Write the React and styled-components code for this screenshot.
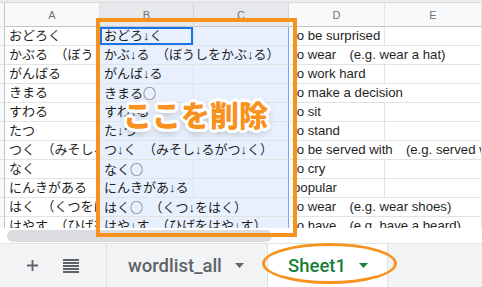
import React from "react";
import styled, { createGlobalStyle, css } from "styled-components";

const orange = "#f7921e";
const gridLine = "#e2e3e3";
const selBg = "#e8f0fe";
const cols = "5px 95px 94px 95px 96px 97px";

const Global = createGlobalStyle`
	html, body {
		margin: 0;
		padding: 0;
		background: #fff;
	}
	body {
		font-family: "Liberation Sans", "Noto Sans CJK JP", sans-serif;
	}
`;

const Page = styled.div`
	position: relative;
	width: 482px;
	height: 287px;
	overflow: hidden;
	display: flex;
	flex-direction: column;
	background: #fff;
`;

const Sheet = styled.div`
	height: 228px;
	overflow: hidden;
	flex-shrink: 0;
`;

const TopStrip = styled.div`
	height: 3px;
	background: #ececec;
	border-bottom: 1px solid #dadada;
	box-sizing: border-box;
`;

const Row = styled.div`
	display: grid;
	grid-template-columns: ${cols};
	height: ${(p) => (p.header ? "24px" : "19px")};
`;

const RowHead = styled.div`
	background: #f8f9fa;
	border-right: 1px solid #c4c7c5;
	border-bottom: 1px solid ${gridLine};
	box-sizing: border-box;
`;

const ColHead = styled.div`
	display: flex;
	align-items: center;
	justify-content: center;
	font-size: 11px;
	color: #6f7378;
	background: ${(p) => (p.selected ? "#e6e8eb" : "#f8f9fa")};
	border-right: 1px solid ${(p) => (p.selected ? "#d3d5d8" : gridLine)};
	border-bottom: 1px solid #c4c7c5;
	box-sizing: border-box;
`;

const Cell = styled.div`
	position: relative;
	box-sizing: border-box;
	border-right: 1px solid ${gridLine};
	border-bottom: 1px solid ${gridLine};
	padding: 0 4px;
	font-size: ${(p) => (p.en ? "13.2px" : "13px")};
	line-height: 18px;
	color: #1f1f1f;
	white-space: nowrap;
	overflow: hidden;
	grid-column: ${(p) => (p.span ? `span ${p.span}` : "auto")};
	${(p) =>
		p.selected &&
		css`
			background: ${selBg};
			border-right-color: #dde3ea;
		`}
	${(p) =>
		p.edge &&
		css`
			border-right: 1px solid #7ba3ee;
		`}
	${(p) =>
		p.active &&
		css`
			box-shadow: inset 0 0 0 2px #1a73e8;
		`}
`;

const Circle = styled.span`
	font-family: "Noto Sans CJK JP", sans-serif;
	color: #444;
`;

const ScrollArea = styled.div`
	height: 15px;
	flex-shrink: 0;
	padding: 2px 0 1px 7px;
	box-sizing: border-box;
	background: #fff;
`;

const Thumb = styled.div`
	width: 265px;
	height: 100%;
	border-radius: 6px;
	background: #dadce0;
`;

const TabBar = styled.div`
	flex: 1;
	display: flex;
	background: #f1f3f4;
	border-top: 1px solid #e3e3e3;
`;

const Tools = styled.div`
	width: 107px;
	display: flex;
	align-items: center;
	padding-left: 26px;
	gap: 24px;
	box-sizing: border-box;
	border-right: 1px solid #e0e0e0;
`;

const Tab = styled.div`
	width: ${(p) => p.w}px;
	display: flex;
	align-items: center;
	gap: 13px;
	padding-left: ${(p) => p.pad}px;
	box-sizing: border-box;
	border-right: 1px solid #e0e0e0;
	font-family: Roboto, "Liberation Sans", sans-serif;
	font-weight: 500;
	font-size: 18.5px;
	color: ${(p) => (p.active ? "#188038" : "#5f6368")};
	background: ${(p) => (p.active ? "#fff" : "transparent")};
`;

const Frame = styled.div`
	position: absolute;
	left: 96px;
	top: 18px;
	width: 201px;
	height: 219px;
	border: 4px solid ${orange};
	box-sizing: border-box;
	pointer-events: none;
`;

const Ring = styled.div`
	position: absolute;
	left: 262px;
	top: 243px;
	width: 135px;
	height: 41px;
	border: 3px solid ${orange};
	border-radius: 50%;
	box-sizing: border-box;
	pointer-events: none;
`;

const Callout = styled.div`
	position: absolute;
	left: 123px;
	top: 99px;
	font-family: "Noto Sans CJK JP", sans-serif;
	font-weight: 900;
	font-size: 29px;
	line-height: 1.1;
	color: ${orange};
	text-shadow: 3px 0 0 #fff, -3px 0 0 #fff, 0 3px 0 #fff, 0 -3px 0 #fff,
		2px 2px 0 #fff, -2px -2px 0 #fff, 2px -2px 0 #fff, -2px 2px 0 #fff,
		3px 1px 0 #fff, -3px 1px 0 #fff, 1px 3px 0 #fff, 1px -3px 0 #fff,
		3px -1px 0 #fff, -3px -1px 0 #fff, -1px 3px 0 #fff, -1px -3px 0 #fff,
		0 3px 9px rgba(0, 0, 0, 0.4);
`;

const rows = [
	{ a: "おどろく", b: "おどろ↓く", d: "to be surprised" },
	{ a: "かぶる　（ぼうしをかぶる）", b: "かぶ↓る　（ぼうしをかぶ↓る）", d: "to wear　(e.g. wear a hat)", wideB: true, wideD: true },
	{ a: "がんばる", b: "がんば↓る", d: "to work hard" },
	{ a: "きまる", b: "きまる○", d: "to make a decision", wideD: true },
	{ a: "すわる", b: "すわ↓る", d: "to sit" },
	{ a: "たつ", b: "た↓つ", d: "to stand" },
	{ a: "つく　（みそしるがつく）", b: "つ↓く　（みそし↓るがつ↓く）", d: "to be served with　(e.g. served with rice)", wideB: true, wideD: true },
	{ a: "なく", b: "なく○", d: "to cry" },
	{ a: "にんきがある", b: "にんきがあ↓る", d: "popular" },
	{ a: "はく　（くつをはく）", b: "はく○　（くつ↓をはく）", d: "to wear　(e.g. wear shoes)", wideB: true, wideD: true },
	{ a: "はやす　（ひげをはやす）", b: "はや↓す　（ひげをはや↓す）", d: "to have　(e.g. have a beard)", wideB: true, wideD: true },
];

// the ○ mark reads as a full-width kana-sized circle in the sheet
const accent = (text) =>
	text.split("○").map((part, i) => (
		<React.Fragment key={i}>
			{i > 0 && <Circle>○</Circle>}
			{part}
		</React.Fragment>
	));

const Plus = () => (
	<svg width="13" height="13" viewBox="0 0 13 13">
		<path d="M6.5 1v11M1 6.5h11" stroke="#5f6368" strokeWidth="1.8" />
	</svg>
);

const ListIcon = () => (
	<svg width="16" height="14" viewBox="0 0 16 14">
		{[1, 4, 7, 10, 13].map((y) => (
			<rect key={y} x="0" y={y - 1} width="16" height="2" fill="#5f6368" />
		))}
	</svg>
);

const Caret = ({ color }) => (
	<svg width="9" height="5" viewBox="0 0 9 5">
		<path d="M0 0h9L4.5 5z" fill={color} />
	</svg>
);

export default function App() {
	return (
		<Page>
			<Global />
			<Sheet>
				<TopStrip />
				<Row header>
					<RowHead />
					<ColHead>A</ColHead>
					<ColHead selected>B</ColHead>
					<ColHead selected>C</ColHead>
					<ColHead>D</ColHead>
					<ColHead>E</ColHead>
				</Row>
				{rows.map((r, i) => (
					<Row key={i}>
						<RowHead />
						<Cell>{r.a}</Cell>
						{r.wideB ? (
							<Cell selected edge span={2}>
								{accent(r.b)}
							</Cell>
						) : (
							<>
								<Cell selected active={i === 0}>
									{accent(r.b)}
								</Cell>
								<Cell selected edge />
							</>
						)}
						{r.wideD ? (
							<Cell en span={2}>
								{r.d}
							</Cell>
						) : (
							<>
								<Cell en>{r.d}</Cell>
								<Cell />
							</>
						)}
					</Row>
				))}
			</Sheet>
			<ScrollArea>
				<Thumb />
			</ScrollArea>
			<TabBar>
				<Tools>
					<Plus />
					<ListIcon />
				</Tools>
				<Tab w={161} pad={21}>
					wordlist_all
					<Caret color="#5f6368" />
				</Tab>
				<Tab w={120} pad={20} active>
					Sheet1
					<Caret color="#188038" />
				</Tab>
			</TabBar>
			<Frame />
			<Ring />
			<Callout>ここを削除</Callout>
		</Page>
	);
}
